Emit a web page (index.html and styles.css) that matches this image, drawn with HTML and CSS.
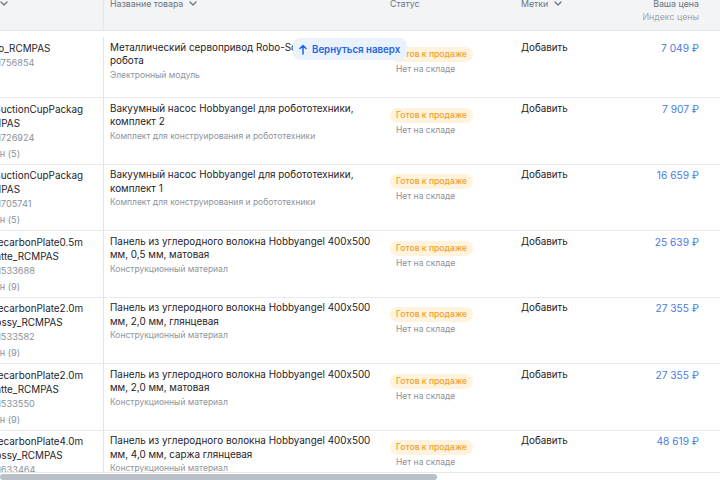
FILE: index.html
```html
<!DOCTYPE html>
<html lang="ru">
<head>
<meta charset="utf-8">
<title>Товары</title>
<link rel="stylesheet" href="styles.css">
</head>
<body>
<div class="page">
  <div class="scroller" id="scroller">
    <div class="table">
      <div class="grid thead">
        <div class="c c-art"><span class="hcell art-h">Товар <svg class="chev" viewBox="0 0 8 5"><path d="M1 1l3 3 3-3"/></svg></span></div>
        <div class="c"><span class="hcell">Название товара <svg class="chev" viewBox="0 0 8 5"><path d="M1 1l3 3 3-3"/></svg></span></div>
        <div class="c">Статус</div>
        <div class="c"><span class="hcell">Метки <svg class="chev" viewBox="0 0 8 5"><path d="M1 1l3 3 3-3"/></svg></span></div>
        <div class="c c-price"><div class="h-main">Ваша цена</div><div class="h-sub">Индекс цены</div></div>
        <div class="c"></div>
      </div>
      <div class="tbody">
        <div class="grid row">
          <div class="c c-art"><div class="art">1Servo_RCMPAS</div><div class="sku">SKU: 1756854</div></div>
          <div class="c"><div class="name">Металлический сервопривод Robo-Soul 25 кг для робота</div><div class="cat">Электронный модуль</div></div>
          <div class="c"><span class="badge">Готов к продаже</span><div class="stock">Нет на складе</div></div>
          <div class="c"><div class="tag">Добавить</div></div>
          <div class="c c-price"><div class="price">7 049 ₽</div></div>
          <div class="c"></div>
        </div>
        <div class="grid row">
          <div class="c c-art"><div class="art">HAI_SuctionCupPackag<wbr>eRCMPAS</div><div class="sku">SKU: 1726924</div><div class="var">Связан (5)</div></div>
          <div class="c"><div class="name">Вакуумный насос Hobbyangel для робототехники, комплект 2</div><div class="cat">Комплект для конструирования и робототехники</div></div>
          <div class="c"><span class="badge">Готов к продаже</span><div class="stock">Нет на складе</div></div>
          <div class="c"><div class="tag">Добавить</div></div>
          <div class="c c-price"><div class="price">7 907 ₽</div></div>
          <div class="c"></div>
        </div>
        <div class="grid row">
          <div class="c c-art"><div class="art">HAI_SuctionCupPackag<wbr>eRCMPAS</div><div class="sku">SKU: 1705741</div><div class="var">Связан (5)</div></div>
          <div class="c"><div class="name">Вакуумный насос Hobbyangel для робототехники, комплект 1</div><div class="cat">Комплект для конструирования и робототехники</div></div>
          <div class="c"><span class="badge">Готов к продаже</span><div class="stock">Нет на складе</div></div>
          <div class="c"><div class="tag">Добавить</div></div>
          <div class="c c-price"><div class="price">16 659 ₽</div></div>
          <div class="c"></div>
        </div>
        <div class="grid row">
          <div class="c c-art"><div class="art">1LargecarbonPlate0.5m<wbr>m_Matte_RCMPAS</div><div class="sku">SKU: 1533688</div><div class="var">Связан (9)</div></div>
          <div class="c"><div class="name">Панель из углеродного волокна Hobbyangel 400x500 мм, 0,5 мм, матовая</div><div class="cat">Конструкционный материал</div></div>
          <div class="c"><span class="badge">Готов к продаже</span><div class="stock">Нет на складе</div></div>
          <div class="c"><div class="tag">Добавить</div></div>
          <div class="c c-price"><div class="price">25 639 ₽</div></div>
          <div class="c"></div>
        </div>
        <div class="grid row">
          <div class="c c-art"><div class="art">1LargecarbonPlate2.0m<wbr>m_Glossy_RCMPAS</div><div class="sku">SKU: 1533582</div><div class="var">Связан (9)</div></div>
          <div class="c"><div class="name">Панель из углеродного волокна Hobbyangel 400x500 мм, 2,0 мм, глянцевая</div><div class="cat">Конструкционный материал</div></div>
          <div class="c"><span class="badge">Готов к продаже</span><div class="stock">Нет на складе</div></div>
          <div class="c"><div class="tag">Добавить</div></div>
          <div class="c c-price"><div class="price">27 355 ₽</div></div>
          <div class="c"></div>
        </div>
        <div class="grid row">
          <div class="c c-art"><div class="art">1LargecarbonPlate2.0m<wbr>m_Matte_RCMPAS</div><div class="sku">SKU: 1533550</div><div class="var">Связан (9)</div></div>
          <div class="c"><div class="name">Панель из углеродного волокна Hobbyangel 400x500 мм, 2,0 мм, матовая</div><div class="cat">Конструкционный материал</div></div>
          <div class="c"><span class="badge">Готов к продаже</span><div class="stock">Нет на складе</div></div>
          <div class="c"><div class="tag">Добавить</div></div>
          <div class="c c-price"><div class="price">27 355 ₽</div></div>
          <div class="c"></div>
        </div>
        <div class="grid row">
          <div class="c c-art"><div class="art">1LargecarbonPlate4.0m<wbr>m_Glossy_RCMPAS</div><div class="sku">SKU: 1633464</div><div class="var">Связан (9)</div></div>
          <div class="c"><div class="name">Панель из углеродного волокна Hobbyangel 400x500 мм, 4,0 мм, саржа глянцевая</div><div class="cat">Конструкционный материал</div></div>
          <div class="c"><span class="badge">Готов к продаже</span><div class="stock">Нет на складе</div></div>
          <div class="c"><div class="tag">Добавить</div></div>
          <div class="c c-price"><div class="price">48 619 ₽</div></div>
          <div class="c"></div>
        </div>
      </div>
    </div>
  </div>
  <div class="hscroll"><div class="thumb"></div></div>
  <button class="back-top" type="button"><svg class="arrow" viewBox="0 0 8 11"><path d="M4 10V1.5M1 4.5L4 1.5L7 4.5"/></svg>Вернуться наверх</button>
</div>
<script src="script.js"></script>
</body>
</html>
```

FILE: styles.css
```css
* { box-sizing: border-box; margin: 0; padding: 0; }
html, body {
  width: 720px;
  height: 480px;
  overflow: hidden;
  background: #ffffff;
  font-family: Inter, "Noto Sans", sans-serif;
  font-feature-settings: "calt" 0;
  color: #1f2328;
}
.page {
  position: relative;
  width: 720px;
  height: 480px;
  display: flex;
  flex-direction: column;
}
.scroller {
  height: 472px;
  overflow: hidden;
  flex: none;
}
.table { width: 800px; }
.grid {
  display: grid;
  grid-template-columns: 144px 280px 131px 92px 98px 55px;
}
.thead {
  height: 39px;
  background: #f3f4f6;
  border-bottom: 1px solid #e3e5e9;
  font-size: 8.8px;
  line-height: 13px;
  color: #6b7380;
}
.thead .c { padding: 5px 6px 0; }
.hcell { display: inline-flex; align-items: center; gap: 6px; white-space: nowrap; }
.art-h { gap: 1px; }
.chev { width: 8px; height: 5px; }
.chev path { fill: none; stroke: #6b7380; stroke-width: 1.3; stroke-linecap: round; stroke-linejoin: round; }
.h-sub { color: #a1a7b0; }
.c-price { text-align: right; }

.tbody { padding-top: 6px; }
.row {
  min-height: 61px;
  border-bottom: 1px solid #e8eaee;
}
.row .c { padding: 3.5px 6px 3px; }

.c-art { border-right: 1px solid #e3e5e9; }
.thead .c.c-art, .row .c.c-art { padding-left: 13px; padding-right: 18px; }

.art { font-size: 9.9px; line-height: 14px; }
.sku, .var { font-size: 9.2px; line-height: 14px; color: #8a919b; white-space: nowrap; }
.sku { margin-top: 1px; }
.var { margin-top: 2px; }

.name { font-size: 9.9px; line-height: 13.5px; }
.cat { font-size: 8.5px; line-height: 13px; margin-top: 1px; color: #8d949e; }

.badge {
  display: inline-block;
  margin-top: 1.5px;
  height: 15px;
  line-height: 15px;
  padding: 0 6px;
  border-radius: 8px;
  background: #fff3de;
  color: #f2a024;
  font-size: 8.6px;
  font-weight: 500;
  white-space: nowrap;
}
.stock { font-size: 8.5px; line-height: 14px; color: #8a919b; padding-left: 6px; }
.tag { font-size: 9.8px; line-height: 14px; }
.price { font-size: 10.2px; line-height: 14px; color: #4a7be3; white-space: nowrap; }

.hscroll {
  flex: 1;
  border-top: 1px solid #e6e8eb;
  padding-top: 1px;
}
.thumb {
  width: 437px;
  height: 6px;
  border-radius: 3px;
  background: #b9c0c8;
}

.back-top {
  position: absolute;
  left: 293px;
  top: 38px;
  width: 114px;
  height: 22px;
  display: flex;
  align-items: center;
  gap: 5px;
  padding: 0 6px;
  border: none;
  border-radius: 8px;
  background: #e9f2fd;
  color: #1c63e6;
  font-family: Inter, "Noto Sans", sans-serif;
  font-size: 9.7px;
  font-weight: 600;
  white-space: nowrap;
}
.arrow { width: 8px; height: 11px; flex: none; }
.arrow path { fill: none; stroke: #1c63e6; stroke-width: 1.5; stroke-linecap: round; stroke-linejoin: round; }
```

FILE: script.js
```js
var s = document.getElementById('scroller');
s.scrollLeft = 40;
s.scrollTop = 8;
```
